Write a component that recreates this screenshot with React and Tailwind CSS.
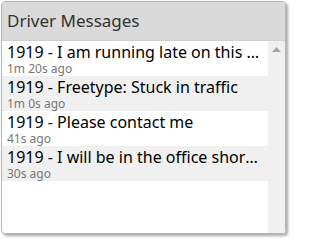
const messages = [
  { text: "1919 - I am running late on this morning's route", time: "1m 20s ago" },
  { text: "1919 - Freetype: Stuck in traffic", time: "1m 0s ago" },
  { text: "1919 - Please contact me", time: "41s ago" },
  { text: "1919 - I will be in the office shortly", time: "30s ago" },
];

function MessageRow({ text, time, odd }) {
  return (
    <div className={`flex flex-col h-[35px] px-[5px] pt-[1px] ${odd ? "bg-[#f0f0f0]" : "bg-white"}`}>
      <div className="text-[16px] leading-[20px] text-black truncate">{text}</div>
      <div className="text-[12px] leading-[13px] text-[#777]">{time}</div>
    </div>
  );
}

export default function App() {
  return (
    <div className="w-[292px] h-[241px] bg-white pt-[1px] pl-[1px]" style={{ fontFamily: '"Noto Sans", sans-serif' }}>
      <div className="flex flex-col w-[285px] h-[233px] border border-[#b5b5b5] rounded-[4px] overflow-hidden shadow-[2px_2px_3px_rgba(0,0,0,0.35)]">
        <div className="h-[39px] shrink-0 bg-[#dadada] border-b border-[#cfcfcf] flex items-center px-[5px] text-[17px] text-[#333]">
          Driver Messages
        </div>
        <div className="flex flex-1 min-h-0">
          <div className="flex-1 min-w-0 flex flex-col">
            {messages.map((m, i) => (
              <MessageRow key={i} text={m.text} time={m.time} odd={i % 2 === 1} />
            ))}
          </div>
          <div className="w-[17px] shrink-0 bg-[#f0f0f0] flex justify-center pt-[6px]">
            <svg width="9" height="5" viewBox="0 0 9 5">
              <path d="M4.5 0 L9 5 L0 5 Z" fill="#a3a3a3" />
            </svg>
          </div>
        </div>
      </div>
    </div>
  );
}
